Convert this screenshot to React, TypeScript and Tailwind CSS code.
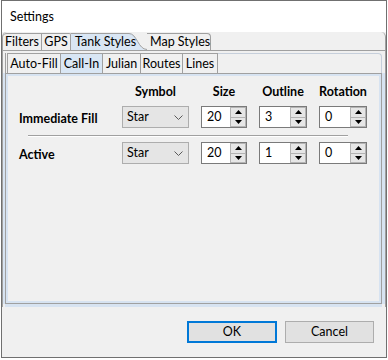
import React from "react";

const Chevron = () => (
  <svg width="9" height="5" viewBox="0 0 9 5" className="block">
    <polyline points="0.5,0.5 4.5,4.5 8.5,0.5" fill="none" stroke="#5a5a5a" strokeWidth="1" />
  </svg>
);

const Combo = ({ value }: { value: string }) => (
  <div className="w-[67px] h-[22px] border border-[#adadad] bg-[#e5e5e5] flex items-center pl-[4px] pr-[5px] justify-between">
    <span>{value}</span>
    <Chevron />
  </div>
);

const Up = () => (
  <svg width="7" height="4" viewBox="0 0 7 4" className="block">
    <polygon points="0,4 7,4 3.5,0" fill="#000" />
  </svg>
);
const Down = () => (
  <svg width="7" height="4" viewBox="0 0 7 4" className="block">
    <polygon points="0,0 7,0 3.5,4" fill="#000" />
  </svg>
);

const Spin = ({ value, w }: { value: string; w: string }) => (
  <div className={`${w} h-[22px] border border-[#7a7a7a] bg-white flex`}>
    <div className="flex-1 flex items-center pl-[5px]">{value}</div>
    <div className="w-[16px] flex flex-col">
      <div className="flex-1 bg-[#e6e6e6] border border-[#b4b4b4] flex items-center justify-center">
        <Up />
      </div>
      <div className="flex-1 bg-[#e6e6e6] border border-t-0 border-[#b4b4b4] flex items-center justify-center">
        <Down />
      </div>
    </div>
  </div>
);

export default function App() {
  return (
    <div className="w-[388px] h-[360px] bg-white pl-[1px] font-['Lato',sans-serif] text-[12.5px] leading-none text-black">
      <div className="w-[386px] h-[358px] border border-[#707070] bg-[#f0f0f0] flex flex-col">
        {/* title */}
        <div className="h-[31px] bg-white flex items-center pl-[8px] pt-[2px]">Settings</div>

        {/* outer tab control */}
        <div className="h-[275px] flex flex-col border-x border-[#a0a0a0] rounded-t-[5px]">
          <div className="h-[19px] flex items-end border-b border-[#a0a0a0]">
            <div className="w-[39px] h-[17px] border-t border-r border-[#a0a0a0] rounded-tl-[4px] flex items-center justify-center pt-[1px]">Filters</div>
            <div className="w-[29px] h-[17px] border-t border-r border-[#a0a0a0] rounded-tr-[2px] flex items-center justify-center pt-[1px]">GPS</div>
            <div className="relative z-10 w-[58px] h-[17px] border-t border-[#a0a0a0] bg-[#d9e6f4] flex items-center pl-[4px] pt-[1px] whitespace-nowrap">
              Tank Styles
            </div>
            <svg width="18" height="17" viewBox="0 0 18 17" className="block">
              <path d="M0 0 C8 0 9 17 18 17 L0 17 Z" fill="#d9e6f4" />
              <path d="M0 0.5 C8 0.5 9 16.5 18 16.5" fill="none" stroke="#a0a0a0" strokeWidth="1" />
            </svg>
            <div className="w-[64px] h-[17px] border-t border-r border-[#a0a0a0] rounded-tr-[4px] flex items-center pl-[3px] pt-[1px] whitespace-nowrap">
              Map Styles
            </div>
          </div>

          {/* outer body */}
          <div className="flex-1 pl-[2px] pr-[3px] pt-[2px] pb-[3px] flex flex-col">
            {/* inner tab control */}
            <div className="h-[20px] flex items-stretch">
              <div className="w-[2px] border-l border-[#a0a0a0]" />
              <div className="w-[54px] border-l border-t border-r border-[#a0a0a0] flex items-center justify-center pt-[1px] whitespace-nowrap">Auto-Fill</div>
              <div className="w-[42px] border-t border-r border-[#a0a0a0] bg-[#d9e6f4] flex items-center justify-center pt-[1px] whitespace-nowrap">Call-In</div>
              <div className="w-[38px] border-t border-r border-[#a0a0a0] flex items-center justify-center pt-[1px]">Julian</div>
              <div className="w-[42px] border-t border-r border-[#a0a0a0] flex items-center justify-center pt-[1px]">Routes</div>
              <div className="w-[35px] border-t border-r border-[#a0a0a0] flex items-center justify-center pt-[1px]">Lines</div>
              <div className="flex-1 border-t border-r border-[#c6cfdb] rounded-tr-[4px]" />
            </div>
            <div className="flex-1 border border-[#a0a0a0] bg-[#f0f0f0] shadow-[inset_0_0_0_2px_#d7e3f1,-2px_0_0_#d7e3f1,3px_0_0_#d7e3f1,0_3px_0_#d7e3f1] pl-[13px] pt-[10px] flex flex-col">
              {/* header */}
              <div className="flex h-[17px] items-center font-bold">
                <div className="w-[103px]" />
                <div className="w-[67px] text-center">Symbol</div>
                <div className="w-[46px] ml-[12px] text-center">Size</div>
                <div className="w-[48px] ml-[12px] text-center">Outline</div>
                <div className="w-[48px] ml-[12px] text-center">Rotation</div>
              </div>
              {/* row 1 */}
              <div className="flex items-center mt-[5px]">
                <div className="w-[103px] font-bold pt-[4px]">Immediate Fill</div>
                <Combo value="Star" />
                <div className="ml-[12px]"><Spin value="20" w="w-[46px]" /></div>
                <div className="ml-[12px]"><Spin value="3" w="w-[48px]" /></div>
                <div className="ml-[12px]"><Spin value="0" w="w-[48px]" /></div>
              </div>
              <div className="ml-[9px] w-[320px] mt-[7px] border-t border-[#a0a0a0] border-b border-b-white" />
              {/* row 2 */}
              <div className="flex items-center mt-[5px]">
                <div className="w-[103px] font-bold pt-[4px]">Active</div>
                <Combo value="Star" />
                <div className="ml-[12px]"><Spin value="20" w="w-[46px]" /></div>
                <div className="ml-[12px]"><Spin value="1" w="w-[48px]" /></div>
                <div className="ml-[12px]"><Spin value="0" w="w-[48px]" /></div>
              </div>
            </div>
          </div>
        </div>

        {/* buttons */}
        <div className="flex-1 flex justify-end items-start pt-[14px] pr-[12px] gap-[8px]">
          <button className="w-[90px] h-[22px] border-2 border-[#0078d7] bg-[#e1e1e1] flex items-center justify-center">OK</button>
          <button className="w-[89px] h-[22px] border border-[#adadad] bg-[#e1e1e1] flex items-center justify-center">Cancel</button>
        </div>
      </div>
    </div>
  );
}
